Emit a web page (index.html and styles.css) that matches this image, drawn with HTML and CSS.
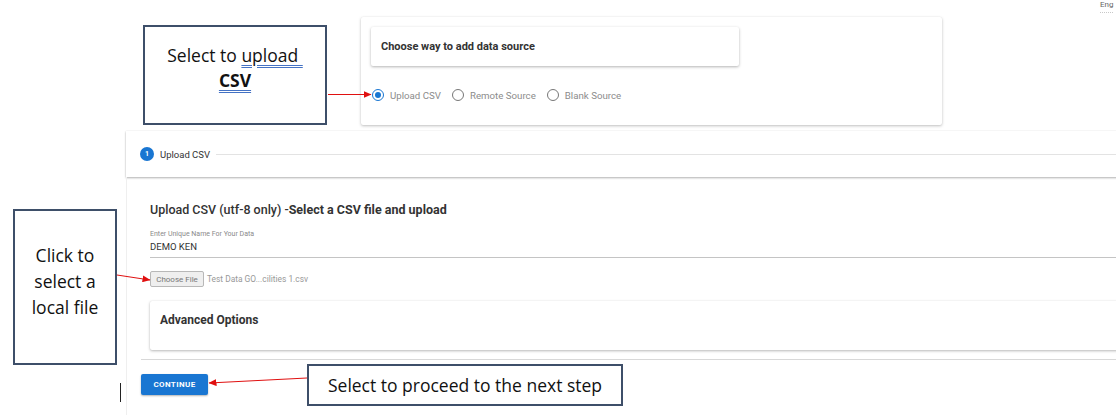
FILE: index.html
```html
<!DOCTYPE html>
<html lang="en">
<head>
<meta charset="utf-8">
<title>Add data source</title>
<link rel="stylesheet" href="styles.css">
</head>
<body>
<div class="page">
  <div class="topbar"><span class="lang">Eng</span></div>

  <section class="source-card">
    <div class="source-head">Choose way to add data source</div>
    <div class="radio-row">
      <label class="radio checked"><span class="dot"></span>Upload CSV</label>
      <label class="radio"><span class="dot"></span>Remote Source</label>
      <label class="radio"><span class="dot"></span>Blank Source</label>
    </div>
  </section>

  <section class="main-card">
    <div class="stepper">
      <span class="step-num">1</span>
      <span class="step-label">Upload CSV</span>
      <span class="step-line"></span>
    </div>
    <div class="step-body">
      <div class="content">
        <h2 class="upload-title">Upload CSV (utf-8 only) -<b>Select a CSV file and upload</b></h2>
        <div class="field">
          <div class="field-label">Enter Unique Name For Your Data</div>
          <div class="field-value">DEMO KEN</div>
        </div>
        <div class="file-row">
          <span class="file-btn">Choose File</span>
          <span class="file-name">Test Data GO...cilities 1.csv</span>
        </div>
        <div class="advanced">Advanced Options</div>
      </div>
      <div class="actions">
        <span class="continue">CONTINUE</span>
      </div>
    </div>
  </section>

  <div class="callout callout-csv">
    <p>Select to <u class="dbl">upload&nbsp;</u><br><b><u class="dbl">CSV</u></b></p>
  </div>
  <div class="callout callout-file">
    <p>Click to<br>select a<br>local file</p>
  </div>
  <div class="callout callout-next">
    <p>Select to proceed to the next step</p>
  </div>
  <div class="cursor"></div>

  <svg class="arrows" width="1116" height="417" viewBox="0 0 1116 417">
    <defs>
      <marker id="ah" markerWidth="8" markerHeight="7" refX="7.5" refY="3.5" orient="auto" markerUnits="userSpaceOnUse">
        <path d="M0,0 L8,3.5 L0,7 Z" fill="#e01010"/>
      </marker>
    </defs>
    <line x1="328" y1="94.5" x2="371" y2="94.5" stroke="#e01010" stroke-width="1" marker-end="url(#ah)"/>
    <line x1="117" y1="275" x2="150" y2="280" stroke="#e01010" stroke-width="1" marker-end="url(#ah)"/>
    <line x1="307" y1="378" x2="209" y2="383" stroke="#e01010" stroke-width="1" marker-end="url(#ah)"/>
  </svg>
</div>
</body>
</html>
```
FILE: styles.css
```css
* { box-sizing: border-box; }
html, body { margin: 0; padding: 0; background: #fff; }
body { width: 1116px; height: 417px; overflow: hidden; font-family: Roboto, "Liberation Sans", sans-serif; color: #333; }
.page { position: relative; width: 1116px; height: 417px; overflow: hidden; }

.topbar { height: 17px; display: flex; align-items: flex-start; padding-left: 1100px; white-space: nowrap; }
.lang { display: block; font-size: 8px; line-height: 9px; color: #666; padding-bottom: 3px; border-bottom: 1px dotted #c8c8c8; }

.source-card { margin-left: 361px; width: 581px; height: 108px; padding: 10px; background: #fff;
  box-shadow: 0 1px 3px rgba(0,0,0,0.25), 0 0 1px rgba(0,0,0,0.08); border-radius: 2px; }
.source-head { width: 368px; height: 39px; padding-left: 10px; line-height: 39px; font-size: 11px; font-weight: 700; color: #333;
  box-shadow: 0 1px 3px rgba(0,0,0,0.3); border-radius: 2px; }
.radio-row { display: flex; align-items: center; margin-top: 23px; padding-left: 1px; height: 12px; }
.radio { display: flex; align-items: center; font-size: 9.7px; color: #8c8c8c; margin-right: 11px; }
.dot { width: 12px; height: 12px; border: 1.5px solid #777; border-radius: 50%; margin-right: 6px; position: relative; }
.radio.checked .dot { border-color: #1976d2; }
.radio.checked .dot::after { content: ""; position: absolute; left: 1.5px; top: 1.5px; width: 6px; height: 6px; border-radius: 50%; background: #1976d2; }

.main-card { margin-top: 6px; margin-left: 126px; width: 1020px; }
.stepper { height: 46px; display: flex; align-items: center; padding-left: 14px; background: #fff;
  box-shadow: 0 1px 2px rgba(0,0,0,0.3), 0 0 1px rgba(0,0,0,0.1); }
.step-num { width: 14px; height: 14px; border-radius: 50%; background: #1976d2; color: #fff; font-size: 7px; font-weight: 700;
  display: flex; align-items: center; justify-content: center; }
.step-label { margin-left: 6px; font-size: 9.5px; color: #333; }
.step-line { flex: 1; height: 1px; background: #e3e3e3; margin-left: 6px; }

.step-body { border-left: 1px solid #efefef; padding-bottom: 20px; }
.content { padding: 25px 0 0 23px; }
.upload-title { margin: 0; font-size: 12.5px; line-height: 16px; font-weight: 500; color: #333; }
.upload-title b { font-weight: 700; }
.field { margin-top: 12px; border-bottom: 1px solid #c4c4c4; padding-bottom: 4px; }
.field-label { font-size: 7px; line-height: 8px; color: #8a8a8a; }
.field-value { margin-top: 3px; font-size: 9.5px; line-height: 12px; color: #333; }
.file-row { display: flex; align-items: center; margin-top: 13px; }
.file-btn { width: 54px; height: 16px; border: 1px solid #b8b8b8; background: #efefef; border-radius: 2px; font-size: 8px;
  color: #777; display: flex; align-items: center; justify-content: center; }
.file-name { margin-left: 3px; font-size: 8.4px; color: #999; }
.advanced { margin-top: 14px; height: 49px; padding: 12px 0 0 10px; font-size: 12px; font-weight: 700; color: #333; line-height: 15px;
  box-shadow: 0 1px 3px rgba(0,0,0,0.28), 0 0 1px rgba(0,0,0,0.1); border-radius: 2px; }
.actions { margin: 9px 0 0 14px; border-top: 1px solid #d8d8d8; padding-top: 12px; }
.continue { display: inline-flex; align-items: center; justify-content: center; width: 67px; height: 21px; background: #1976d2;
  color: #fff; font-size: 8px; font-weight: 700; border-radius: 2px; box-shadow: 0 1px 2px rgba(0,0,0,0.3); letter-spacing: 0.4px; }

.callout { position: absolute; background: #fff; border: 2px solid #3e4f69; display: flex; align-items: center; justify-content: center;
  font-family: "Open Sans", "Noto Sans", sans-serif; color: #111; text-align: center; }
.callout p { margin: 0; }
.callout-csv { left: 143px; top: 25px; width: 184px; height: 100px; font-size: 17.5px; line-height: 25px; }
.callout-csv p { margin-top: -15px; }
.dbl { text-decoration: underline double #4472c4; text-underline-offset: 3px; }
.callout-file { left: 13px; top: 209px; width: 104px; height: 156px; font-size: 17.5px; line-height: 26px; }
.callout-file p { margin-top: -12px; }
.callout-next { left: 307px; top: 364px; width: 316px; height: 42px; font-size: 17.5px; line-height: 22px; }
.cursor { position: absolute; left: 120px; top: 383px; width: 1px; height: 19px; background: #222; }
.arrows { position: absolute; left: 0; top: 0; pointer-events: none; }
```
